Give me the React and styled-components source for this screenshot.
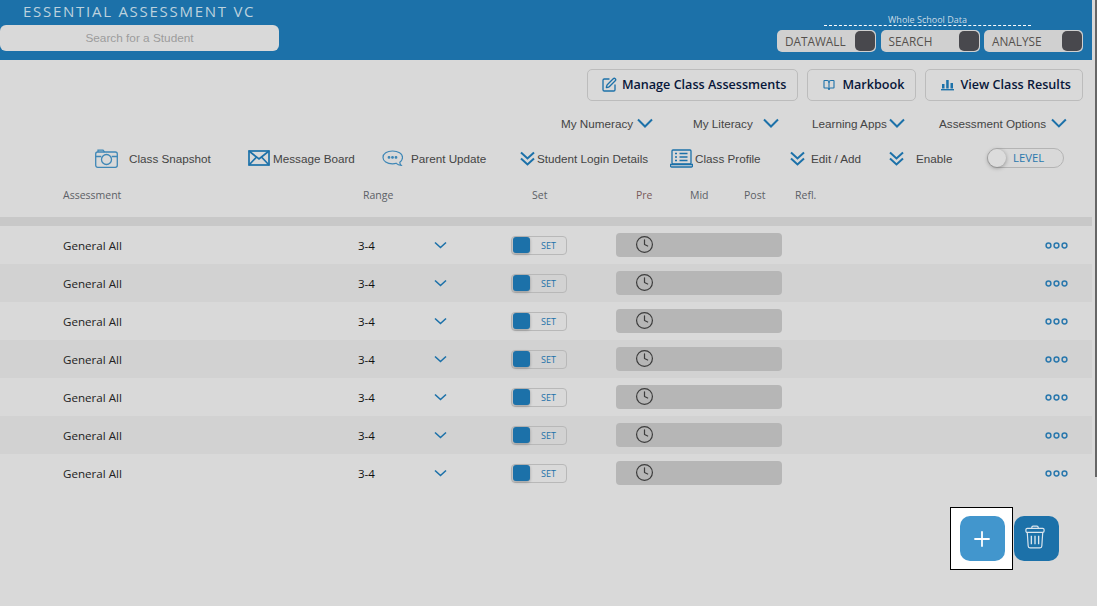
import React from 'react'
import styled, { createGlobalStyle } from 'styled-components'
import { Clock, SquarePen, BookOpen, Plus } from 'lucide-react'

const blue = '#1c71a9'

const GlobalStyle = createGlobalStyle`
  html, body { margin: 0; padding: 0; background: #d9d9d9; overflow: hidden; }
  body { font-family: "Open Sans", sans-serif; }
`

const rows = [0, 1, 2, 3, 4, 5, 6]

const menuItems = [
  { text: 'My Numeracy', width: 132, gap: 4 },
  { text: 'My Literacy', width: 119, gap: 10 },
  { text: 'Learning Apps', width: 127, gap: 2 },
  { text: 'Assessment Options', width: 128, gap: 5 },
]

const Chevron = () => (
  <svg width="16" height="10" viewBox="0 0 16 10" fill="none" stroke={blue} strokeWidth="2">
    <path d="M1 1.500l7 7 7-7" />
  </svg>
)

const SmallChevron = () => (
  <svg width="13" height="8" viewBox="0 0 13 8" fill="none" stroke={blue} strokeWidth="1.600">
    <path d="M1 1.500l5.500 5 5.500-5" />
  </svg>
)

const DoubleChevron = () => (
  <svg width="15" height="15" viewBox="0 0 15 15" fill="none" stroke={blue} strokeWidth="2">
    <path d="M1 1.500l6.500 6 6.500-6M1 7.500l6.500 6 6.500-6" />
  </svg>
)

const MoreDots = () => (
  <svg width="23" height="7" viewBox="0 0 23 7" fill="none" stroke="#2a78ad" strokeWidth="1.500">
    <circle cx="3.500" cy="3.500" r="2.400" />
    <circle cx="11.500" cy="3.500" r="2.400" />
    <circle cx="19.500" cy="3.500" r="2.400" />
  </svg>
)

const App = () => {
  return (
    <Page>
      <GlobalStyle />
      <ScrollThumb />
      <Header>
        <Brand>
          <Title>ESSENTIAL ASSESSMENT VC</Title>
          <Search>Search for a Student</Search>
        </Brand>
        <SchoolData>
          <SchoolLabel>Whole School Data</SchoolLabel>
          <SchoolButtons>
            <SchoolButton>DATAWALL<Knob /></SchoolButton>
            <SchoolButton>SEARCH<Knob /></SchoolButton>
            <SchoolButton>ANALYSE<Knob /></SchoolButton>
          </SchoolButtons>
        </SchoolData>
      </Header>

      <ActionBar>
        <ActionButton>
          <IconSlot><SquarePen size={16} color={blue} strokeWidth={2} /></IconSlot>
          Manage Class Assessments
        </ActionButton>
        <ActionButton>
          <IconSlot><BookOpen size={12} color={blue} strokeWidth={2.2} /></IconSlot>
          Markbook
        </ActionButton>
        <ActionButton>
          <IconSlot>
            <svg width="13" height="12" viewBox="0 0 13 12" fill={blue}>
              <rect x="0" y="10" width="13" height="1.400" />
              <rect x="1" y="5" width="2.500" height="4.500" />
              <rect x="5.200" y="1" width="2.500" height="8.500" />
              <rect x="9.500" y="4" width="2.500" height="5.500" />
            </svg>
          </IconSlot>
          View Class Results
        </ActionButton>
      </ActionBar>

      <MenuRow>
        {menuItems.map(item => (
          <MenuItem key={item.text} $width={item.width} $gap={item.gap}>
            {item.text}
            <Chevron />
          </MenuItem>
        ))}
      </MenuRow>

      <ToolRow>
        <Tool $width={153} $gap={11}>
          <svg width="23" height="19" viewBox="0 0 23 19" fill="none" stroke="#3f87b6" strokeWidth="1.300">
            <rect x=".7" y="3" width="21.600" height="15.300" rx="2" />
            <path d="M3 3V1.200h5L9.500 3M.7 7.500h5.600M16.700 7.500h5.600" />
            <circle cx="11.500" cy="10.500" r="5" />
          </svg>
          Class Snapshot
        </Tool>
        <Tool $width={134} $gap={3}>
          <svg width="22" height="16" viewBox="0 0 22 16" fill="none" stroke={blue} strokeWidth="1.700">
            <rect x="1" y="1" width="20" height="14" />
            <path d="M1 1l10 8 10-8M1 15l7.500-8M21 15l-7.500-8" />
          </svg>
          Message Board
        </Tool>
        <Tool $width={138} $gap={8}>
          <svg width="21" height="17" viewBox="0 0 21 17" fill="none" stroke="#3f87b6" strokeWidth="1.200">
            <path d="M10.500 1C5 1 1 3.600 1 7.400s4 6.400 9.500 6.400c1.400 0 2.600-.1 3.700-.5 1.200 1.200 3 2 5 2.100-.8-.9-1.400-2-1.400-3.200 1.700-1.200 2.700-2.800 2.700-4.800C20.500 3.600 16 1 10.500 1z" />
            <circle cx="7" cy="7.400" r=".8" fill={blue} />
            <circle cx="10.500" cy="7.400" r=".8" fill={blue} />
            <circle cx="14" cy="7.400" r=".8" fill={blue} />
          </svg>
          Parent Update
        </Tool>
        <Tool $width={150} $gap={2}><DoubleChevron />Student Login Details</Tool>
        <Tool $width={120} $gap={2}>
          <svg width="23" height="19" viewBox="0 0 23 19" fill="none" stroke={blue} strokeWidth="1.300">
            <rect x="2" y="1" width="19" height="14" rx="1" />
            <path d="M.5 15.500h22v1.500a1 1 0 0 1-1 1h-20a1 1 0 0 1-1-1z" />
            <path d="M9.500 4.500h8M9.500 8h8M9.500 11.500h8M5 4.500h2M5 8h2M5 11.500h2" />
          </svg>
          Class Profile
        </Tool>
        <Tool $width={99} $gap={6}><DoubleChevron />Edit / Add</Tool>
        <Tool $width={98} $gap={12}><DoubleChevron />Enable</Tool>
        <LevelToggle><LevelKnob />LEVEL</LevelToggle>
      </ToolRow>

      <TableHead>
        <HeadCell $width={300}>Assessment</HeadCell>
        <HeadCell $width={169}>Range</HeadCell>
        <HeadCell $width={104}>Set</HeadCell>
        <HeadCell $width={54} $color="#7a5a5a">Pre</HeadCell>
        <HeadCell $width={54}>Mid</HeadCell>
        <HeadCell $width={51}>Post</HeadCell>
        <HeadCell>Refl.</HeadCell>
      </TableHead>
      <HeadBand />

      {rows.map(row => (
        <Row key={row} $striped={row % 2 === 1}>
          <NameCell>General All</NameCell>
          <RangeCell>3-4</RangeCell>
          <ChevronCell><SmallChevron /></ChevronCell>
          <SetToggle><SetKnob />SET</SetToggle>
          <TimeBar><Clock size={19} color="#3d3d3d" strokeWidth={1.500} /></TimeBar>
          <MoreDots />
        </Row>
      ))}

      <FooterActions>
        <AddFrame>
          <RoundButton $color="#4296cd"><Plus size={24} color="#fff" strokeWidth={1.800} /></RoundButton>
        </AddFrame>
        <RoundButton $color={blue}>
          <TrashIcon width="20" height="24" viewBox="0 0 22 26" fill="none" stroke="#dbe6ee" strokeWidth="1.300">
            <path d="M7.500 3.500V2.400a1.400 1.400 0 0 1 1.400-1.400h4.200a1.400 1.400 0 0 1 1.400 1.400v1.100" />
            <rect x="1" y="3.500" width="20" height="4.500" rx="1.500" />
            <path d="M2.500 8l1 15a2 2 0 0 0 2 2h11a2 2 0 0 0 2-2l1-15" />
            <path d="M7 11.500v9.500M11 11.500v9.500M15 11.500v9.500" strokeWidth="1.500" />
          </TrashIcon>
        </RoundButton>
      </FooterActions>
    </Page>
  )
}

export default App

const Page = styled.div`
  position: relative;
  width: 1097px;
  height: 606px;
  background: #d9d9d9;
  overflow: hidden;
`
const ScrollThumb = styled.div`
  position: absolute;
  top: 0;
  right: 0;
  width: 2px;
  height: 477px;
  background: #666;
`
const Header = styled.header`
  width: 1092px;
  height: 60px;
  background: #1c71a9;
  display: flex;
  justify-content: space-between;
`
const Brand = styled.div`
  display: flex;
  flex-direction: column;
`
const Title = styled.div`
  color: #bdd2de;
  font-size: 15px;
  line-height: 23px;
  letter-spacing: 1.730px;
  padding-left: 23px;
`
const Search = styled.div`
  width: 279px;
  height: 26px;
  margin-top: 2px;
  border-radius: 6px;
  background: #d9d9d9;
  color: #9c9c9c;
  font: 11.800px/26px "Liberation Sans", sans-serif;
  text-align: center;
`
const SchoolData = styled.div`
  display: flex;
  flex-direction: column;
  align-items: flex-end;
  padding: 14px 9px 0 0;
`
const SchoolLabel = styled.div`
  width: 207px;
  margin-right: 52px;
  height: 11px;
  border-bottom: 1px dashed #fff;
  color: #c9dbe6;
  font-size: 9px;
  line-height: 11px;
  text-align: center;
`
const SchoolButtons = styled.div`
  display: flex;
  gap: 4.500px;
  margin-top: 4px;
`
const SchoolButton = styled.div`
  width: 99px;
  height: 22px;
  box-sizing: border-box;
  border-radius: 5px;
  background: #d0d0d0;
  color: #55504d;
  font-size: 11.800px;
  line-height: 22px;
  padding-left: 8px;
  display: flex;
  justify-content: space-between;
  align-items: center;
`
const Knob = styled.span`
  width: 20px;
  height: 20px;
  margin-right: 1px;
  border-radius: 5px;
  background: #48484d;
`
const ActionBar = styled.div`
  display: flex;
  justify-content: flex-end;
  gap: 9px;
  padding: 9px 14px 0 0;
  box-sizing: border-box;
`
const ActionButton = styled.div`
  height: 32px;
  box-sizing: border-box;
  padding: 0 11px 1px 13px;
  display: flex;
  align-items: center;
  gap: 5px;
  border: 1px solid #bcbcbc;
  border-radius: 5px;
  color: #08173a;
  font-size: 12.600px;
  font-weight: 600;
`
const IconSlot = styled.span`
  width: 16px;
  display: flex;
  justify-content: center;
`
const MenuRow = styled.div`
  display: flex;
  padding: 10px 0 0 561px;
  height: 24px;
`
const MenuItem = styled.div`
  width: ${p => p.$width}px;
  display: flex;
  align-items: center;
  gap: ${p => p.$gap}px;
  color: #444;
  font: 11.700px "Liberation Sans", sans-serif;
  white-space: nowrap;
`
const ToolRow = styled.div`
  display: flex;
  align-items: center;
  height: 26px;
  margin-top: 10px;
  padding-left: 95px;
`
const Tool = styled.div`
  width: ${p => p.$width}px;
  display: flex;
  align-items: center;
  gap: ${p => p.$gap}px;
  color: #444;
  font: 11.700px "Liberation Sans", sans-serif;
  white-space: nowrap;
`
const LevelToggle = styled.div`
  position: relative;
  width: 77px;
  height: 20px;
  box-sizing: border-box;
  border: 1px solid #b4b4b4;
  border-radius: 10px;
  color: #2a78ad;
  font-size: 11.300px;
  line-height: 18px;
  padding-left: 25px;
`
const LevelKnob = styled.span`
  position: absolute;
  left: 0;
  top: 0;
  width: 18px;
  height: 18px;
  border-radius: 50%;
  background: #dcdcdc;
  box-shadow: 0 1px 4px rgba(0, 0, 0, 0.35);
`
const TableHead = styled.div`
  display: flex;
  padding: 16px 0 0 63px;
  height: 23px;
  color: #5c6066;
  font-size: 10.500px;
  line-height: 16px;
`
const HeadCell = styled.div`
  width: ${p => (p.$width ? `${p.$width}px` : 'auto')};
  color: ${p => p.$color || 'inherit'};
`
const HeadBand = styled.div`
  width: 1092px;
  height: 9px;
  margin-top: 7px;
  background: #c8c8c8;
`
const Row = styled.div`
  width: 1092px;
  height: 38px;
  display: flex;
  align-items: center;
  background: ${p => (p.$striped ? '#d2d2d2' : '#d9d9d9')};
  font-size: 11.600px;
  color: #222;
`
const NameCell = styled.div`
  width: 295px;
  padding-left: 63px;
`
const RangeCell = styled.div`
  width: 76px;
  color: #111;
  font-size: 11.500px;
`
const ChevronCell = styled.div`
  width: 77px;
  display: flex;
  align-items: center;
`
const SetToggle = styled.div`
  position: relative;
  width: 56px;
  height: 19px;
  box-sizing: border-box;
  border: 1px solid #b8b8b8;
  border-radius: 4px;
  color: #1c71a9;
  font-size: 9px;
  line-height: 17px;
  padding-left: 29px;
  margin-right: 49px;
`
const SetKnob = styled.span`
  position: absolute;
  left: 1px;
  top: 0;
  width: 17px;
  height: 16px;
  border-radius: 3px;
  background: #1c71a9;
  box-shadow: 0 1px 3px rgba(0, 0, 0, 0.3);
`
const TimeBar = styled.div`
  width: 166px;
  height: 24px;
  border-radius: 4px;
  background: #b6b6b6;
  display: flex;
  align-items: flex-start;
  padding: 2px 0 0 19px;
  box-sizing: border-box;
  margin-right: 263px;
`
const FooterActions = styled.div`
  display: flex;
  align-items: center;
  justify-content: flex-end;
  gap: 1px;
  padding: 15px 38px 0 0;
`
const AddFrame = styled.div`
  width: 63px;
  height: 63px;
  box-sizing: border-box;
  background: #fff;
  border: 1px solid #000;
  display: flex;
  align-items: center;
  justify-content: center;
  padding-left: 1px;
`
const RoundButton = styled.div`
  width: 45px;
  height: 45px;
  border-radius: 10px;
  background: ${p => p.$color};
  display: flex;
  align-items: center;
  justify-content: center;
`
const TrashIcon = styled.svg`
  margin: 0 3px 3px 0;
`
